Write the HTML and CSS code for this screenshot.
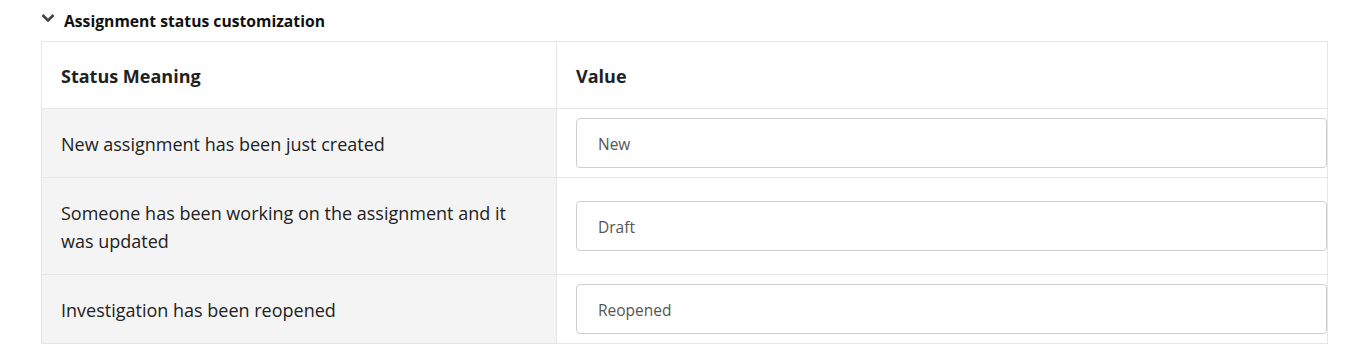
FILE: index.html
```html
<!DOCTYPE html>
<html lang="en">
<head>
<meta charset="UTF-8">
<title>Assignment status customization</title>
<link rel="stylesheet" href="styles.css">
</head>
<body>
<div class="section">
    <div class="section-title">
        <svg class="chevron" width="14" height="10" viewBox="0 0 14 10">
            <path d="M1.5 2 L7 7.5 L12.5 2" fill="none" stroke="#444" stroke-width="2.6"/>
        </svg>
        <span>Assignment status customization</span>
    </div>
    <table class="status-table">
        <thead>
            <tr>
                <th class="col-meaning">Status Meaning</th>
                <th class="col-value">Value</th>
            </tr>
        </thead>
        <tbody>
            <tr>
                <td class="meaning">New assignment has been just created</td>
                <td class="value"><input type="text" value="New"></td>
            </tr>
            <tr>
                <td class="meaning">Someone has been working on the assignment and it was updated</td>
                <td class="value"><input type="text" value="Draft"></td>
            </tr>
            <tr>
                <td class="meaning">Investigation has been reopened</td>
                <td class="value"><input type="text" value="Reopened"></td>
            </tr>
        </tbody>
    </table>
</div>
</body>
</html>
```

FILE: styles.css
```css
body {
    margin: 0;
    padding: 0;
    background-color: #fff;
    font-family: "Open Sans", "Noto Sans", sans-serif;
    color: #222;
}
.section {
    padding: 9px 0 0 41px;
    width: 1287px;
}
.section-title {
    display: flex;
    align-items: center;
    height: 24px;
    font-size: 15.7px;
    font-weight: 700;
    color: #111;
    margin-bottom: 8px;
}
.chevron {
    margin-right: 9px;
    margin-top: -6px;
}
.status-table {
    width: 1287px;
    border-collapse: collapse;
    border: 1px solid #e6e6e6;
    table-layout: fixed;
}
.status-table th,
.status-table td {
    border: 1px solid #e6e6e6;
    text-align: left;
    vertical-align: middle;
}
.status-table th {
    height: 64px;
    padding: 2px 19px 0;
    font-size: 18px;
    font-weight: 700;
    color: #222;
    background-color: #fff;
}
.col-meaning {
    width: 476px;
}
.meaning {
    background-color: #f4f4f4;
    padding: 21px 19px 19px;
    font-size: 18px;
    line-height: 28px;
    color: #222;
}
.value {
    padding: 9px 0 9px 19px;
    background-color: #fff;
}
.value input {
    display: block;
    box-sizing: border-box;
    width: 100%;
    height: 50px;
    padding: 2px 21px 0;
    border: 1px solid #cfcfcf;
    border-radius: 4px;
    font-family: "Open Sans", "Noto Sans", sans-serif;
    font-size: 15.5px;
    color: #555;
    background-color: #fff;
}
```
